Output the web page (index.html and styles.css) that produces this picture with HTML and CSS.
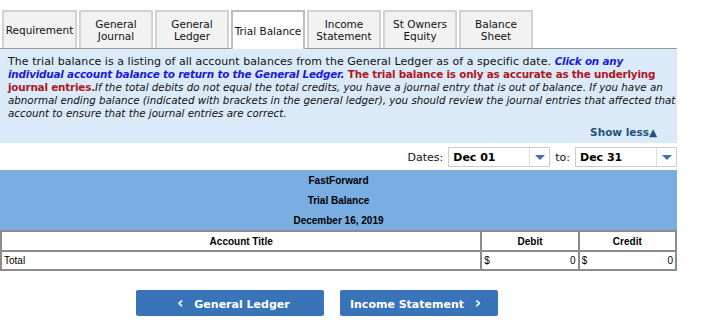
FILE: index.html
```html
<!DOCTYPE html>
<html lang="en">
<head>
    <meta charset="UTF-8">
    <title>Trial Balance</title>
    <link rel="stylesheet" href="styles.css">
</head>
<body>
    <div class="page">
        <div class="tabs">
            <div class="tab">Requirement</div>
            <div class="tab">General<br>Journal</div>
            <div class="tab">General<br>Ledger</div>
            <div class="tab active">Trial Balance</div>
            <div class="tab">Income<br>Statement</div>
            <div class="tab">St Owners<br>Equity</div>
            <div class="tab">Balance<br>Sheet</div>
        </div>

        <div class="info">
            <p>The trial balance is a listing of all account balances from the General Ledger as of a specific date. <b class="blue"><i>Click on any<br>individual account balance to return to the General Ledger.</i></b> <b class="red">The trial balance is only as accurate as the underlying<br>journal entries.</b><i class="note">If the total debits do not equal the total credits, you have a journal entry that is out of balance. If you have an<br>abnormal ending balance (indicated with brackets in the general ledger), you should review the journal entries that affected that<br>account to ensure that the journal entries are correct.</i></p>
            <div class="show-less">Show less&#9650;</div>
        </div>

        <div class="dates">
            <span class="label">Dates:</span>
            <div class="select"><span>Dec 01</span><div class="arrow"></div></div>
            <span class="label">to:</span>
            <div class="select"><span>Dec 31</span><div class="arrow"></div></div>
        </div>

        <div class="report-head">
            <div>FastForward</div>
            <div>Trial Balance</div>
            <div>December 16, 2019</div>
        </div>

        <table class="tb">
            <tr>
                <th class="col-title">Account Title</th>
                <th class="col-amt">Debit</th>
                <th class="col-amt">Credit</th>
            </tr>
            <tr>
                <td>Total</td>
                <td class="amt"><span>$</span><span>0</span></td>
                <td class="amt"><span>$</span><span>0</span></td>
            </tr>
        </table>

        <div class="nav">
            <button class="nav-btn prev"><span class="chev">&lsaquo;</span> General Ledger</button>
            <button class="nav-btn next">Income Statement <span class="chev">&rsaquo;</span></button>
        </div>
    </div>
</body>
</html>
```

FILE: styles.css
```css
body { margin: 0; padding: 0; background: #fff; color: #000; font-family: 'DejaVu Sans', Verdana, sans-serif; }
.page { width: 677px; }

.tabs { display: flex; gap: 2px; padding: 10px 0 0 2px; border-bottom: 1px solid #9a9a9a; }
.tab { width: 70px; height: 36px; border: 2px solid #d2d2d2; border-bottom: none; background: #f2f2f2; font-size: 10.5px; line-height: 12px; text-align: center; display: flex; align-items: center; justify-content: center; color: #111; box-sizing: content-box; white-space: nowrap; }
.tab:first-child { width: 71px; }
.tab.active { background: #fff; border-color: #bdbdbd; margin-bottom: -1px; height: 37px; }

.info { background: #dbeaf8; padding: 6px 4px 5px 8px; }
.info p { margin: 0; font-size: 11px; line-height: 12px; letter-spacing: 0.05px; color: #111; white-space: nowrap; }
.info .blue { color: #1a1adc; font-size: 10.4px; letter-spacing: -0.2px; }
.info .red { color: #b0161e; font-size: 10.4px; letter-spacing: -0.2px; }
.info .note { font-size: 10.3px; letter-spacing: 0; }
.show-less { text-align: right; font-size: 10.5px; font-weight: bold; color: #24507f; margin-top: 6px; padding-right: 16px; }

.dates { display: flex; justify-content: flex-end; align-items: center; gap: 5px; padding: 4px 0 3px; }
.dates .label { font-size: 11px; color: #111; }
.select { width: 100px; height: 18px; border: 1px solid #ccc; display: flex; align-items: center; justify-content: space-between; font-size: 11px; font-weight: bold; }
.select span { padding-left: 4px; }
.select .arrow { width: 19px; height: 18px; border-left: 1px solid #ddd; position: relative; }
.select .arrow::after { content: ""; position: absolute; left: 5px; top: 7px; border-left: 5px solid transparent; border-right: 5px solid transparent; border-top: 5px solid #3e6fb8; }

.report-head { background: #7aaee3; text-align: center; font-family: 'Liberation Sans', Arial, sans-serif; font-weight: bold; font-size: 10px; }
.report-head div { height: 20px; line-height: 22px; }

.tb { width: 677px; border-collapse: collapse; font-family: 'Liberation Sans', Arial, sans-serif; font-size: 10px; }
.tb th, .tb td { border: 2px solid #8c8c8c; height: 17px; padding: 0 2px; }
.tb th { font-weight: bold; text-align: center; height: 18px; }
.tb .col-title { width: 479px; }
.tb .col-amt { width: 92px; }
.tb td.amt span:first-child { float: left; }
.tb td.amt span:last-child { float: right; }
.tb tr:last-child td:first-child { border-right: none; }

.nav { display: flex; gap: 16px; padding: 19px 0 0 136px; }
.nav-btn { height: 26px; border: none; border-radius: 2px; background: #3a74b8; color: #fff; font-family: 'DejaVu Sans', Verdana, sans-serif; font-weight: bold; font-size: 11px; cursor: pointer; white-space: nowrap; padding: 0; }
.nav-btn.prev { width: 188px; }
.nav-btn.next { width: 158px; }
.chev { font-size: 15px; margin: 0 7px; }
```
